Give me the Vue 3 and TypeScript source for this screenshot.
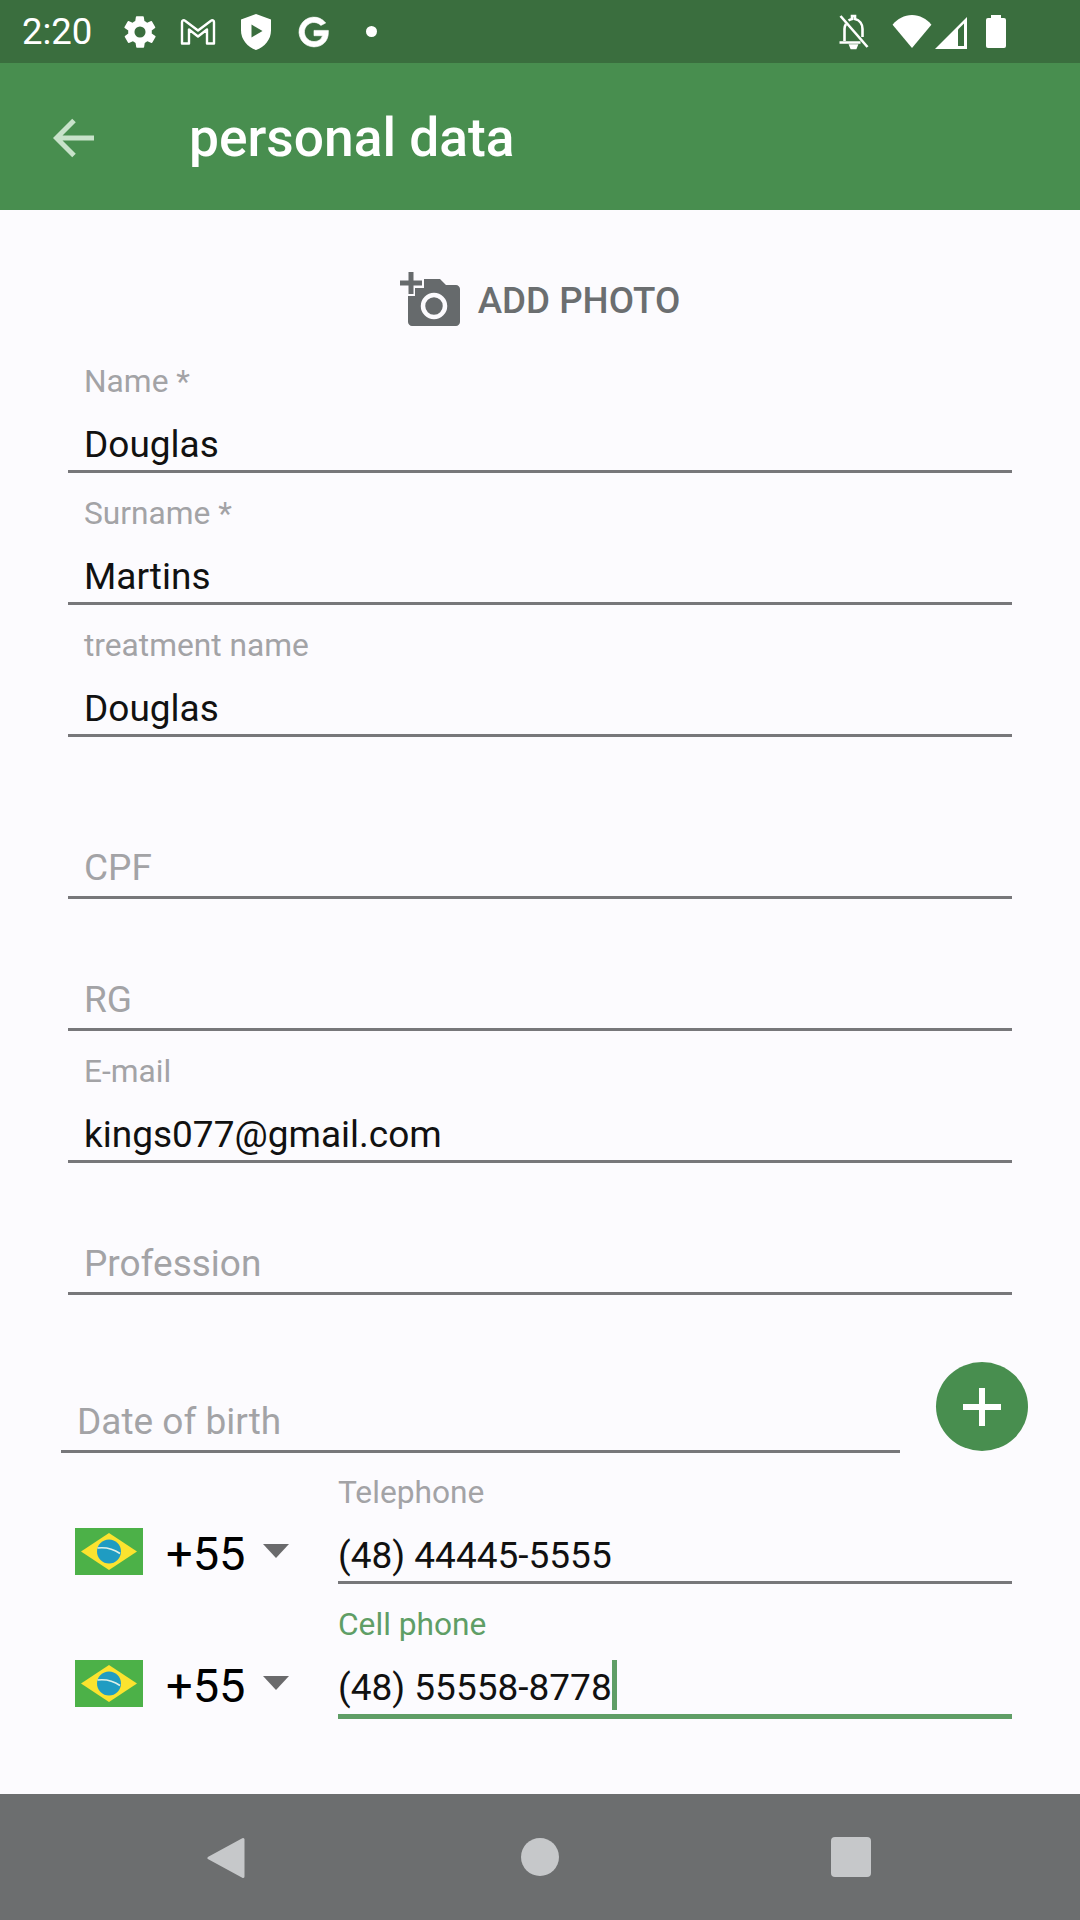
<template>
  <div class="screen">
    <header class="status-bar">
      <span class="clock">2:20</span>
      <div class="status-left">
        <svg class="gear" viewBox="0 0 24 24"><path d="M19.4 13a7.6 7.6 0 0 0 0-2l2.1-1.6a.5.5 0 0 0 .1-.6l-2-3.500a.5.5 0 0 0-.6-.2l-2.500 1a7.3 7.3 0 0 0-1.700-1l-.4-2.600a.5.5 0 0 0-.5-.4h-4a.5.5 0 0 0-.5.4l-.4 2.600a7.3 7.3 0 0 0-1.700 1l-2.500-1a.5.5 0 0 0-.6.2l-2 3.500a.5.5 0 0 0 .1.6L4.600 11a7.6 7.6 0 0 0 0 2l-2.100 1.600a.5.5 0 0 0-.1.6l2 3.500c.1.2.4.3.6.2l2.500-1c.5.4 1.100.7 1.700 1l.4 2.600c0 .2.2.4.5.4h4c.3 0 .5-.2.5-.4l.4-2.600c.6-.3 1.200-.6 1.700-1l2.500 1c.2.1.5 0 .6-.2l2-3.500a.5.5 0 0 0-.1-.6zM12 15.500a3.500 3.500 0 1 1 0-7 3.500 3.500 0 0 1 0 7z"/></svg>
        <svg class="gmail" viewBox="0 0 36 28"><path d="M2 26V4.500c0-1.600 1.800-2.300 3-1.300L18 13 31 3.200c1.200-1 3-.3 3 1.300V26h-7V12l-9 7-9-7v14z" fill="none" stroke="#fff" stroke-width="2.400" stroke-linejoin="round"/></svg>
        <svg class="shield" viewBox="0 0 30 36"><path d="M15 0l15 5.500v11C30 25.500 23.500 33 15 36 6.500 33 0 25.500 0 16.500v-11z" fill="#fff"/><path d="M10.500 10.500v13L21.500 17z" fill="#3a6e3e"/></svg>
        <svg class="google" viewBox="0 0 32 32"><path d="M27 7.500A14 14 0 1 0 16 30c8 0 13.500-5.500 13.500-13.500v-2H16v5h8c-1 3.500-4 5.500-8 5.500a9 9 0 1 1 6.500-15.200z" fill="#fff" stroke="#fff" stroke-width=".6"/></svg>
        <span class="dot"></span>
      </div>
      <div class="status-right">
        <svg class="bell" viewBox="0 0 32 36"><path d="M7 27V15c0-2 .5-3.500 1.500-5M11 6.500c1-.7 2-1.200 3.500-1.500V2h3v3c4.500 1 7.500 5 7.500 10v8M2 28.500h21M13 31.500h6l-1 2.500h-4z" fill="none" stroke="#fff" stroke-width="2.600"/><path d="M3 2l27 31" stroke="#fff" stroke-width="2.600"/></svg>
        <svg class="wifi" viewBox="0 0 40 34"><path d="M20 34L0 10C5 4 12 0 20 0s15 4 20 10z" fill="#fff"/></svg>
        <svg class="signal" viewBox="0 0 32 32"><path d="M0 32L32 0v32z" fill="#fff"/><path d="M23 12.500v16.500h6V6.500z" fill="#3a6e3e"/></svg>
        <span class="battery"></span>
      </div>
    </header>

    <div class="app-bar">
      <svg class="back" viewBox="0 0 42 42"><path d="M41 21H4M21 3.500L3.500 21 21 38.500" fill="none" stroke="#c8e2ca" stroke-width="5"/></svg>
      <h1>personal data</h1>
    </div>

    <main class="form">
      <div class="add-photo">
        <svg viewBox="0 0 60 54"><path d="M24 7h16l6 6h10c2 0 4 2 4 4v33c0 2-2 4-4 4H12c-2 0-4-2-4-4V24h7v-8h9z" fill="#666a6c"/><circle cx="34" cy="34" r="11" fill="none" stroke="#fcfbfe" stroke-width="4.500"/><path d="M8.500 0h5v8.500H22v5h-8.500V22h-5v-8.500H0v-5h8.500z" fill="#666a6c"/></svg>
        <span>ADD PHOTO</span>
      </div>

      <div v-for="f in fields" :key="f.label" class="field" :class="{ gap: f.gap }">
        <label v-if="f.value">{{ f.label }}</label>
        <div class="value" :class="{ hint: !f.value }">{{ f.value || f.label }}</div>
      </div>

      <div class="date-row">
        <div class="date-field">
          <div class="value hint">Date of birth</div>
        </div>
        <button class="fab">
          <svg viewBox="0 0 38 38"><path d="M19 0v38M0 19h38" stroke="#fff" stroke-width="6"/></svg>
        </button>
      </div>

      <div v-for="p in phones" :key="p.label" class="phone-row" :class="{ active: p.focused }">
        <div class="country">
          <svg class="flag" viewBox="0 0 68 47">
            <rect width="68" height="47" fill="#4cb148"/>
            <path d="M34 5l28 18.500L34 42 6 23.500z" fill="#fbe32f"/>
            <circle cx="34" cy="23.500" r="12" fill="#1f9cc2"/>
            <path d="M22.500 20c8-1 16 1 22.500 5.500" fill="none" stroke="#dff1e8" stroke-width="1.600"/>
          </svg>
          <span class="code">+55</span>
          <span class="caret"></span>
        </div>
        <div class="field phone-field" :class="{ focused: p.focused }">
          <label>{{ p.label }}</label>
          <div class="value">{{ p.value }}<i v-if="p.focused" class="cursor"></i></div>
        </div>
      </div>
    </main>

    <nav class="nav-bar">
      <svg class="nav-back" viewBox="0 0 38 42"><path d="M36 2.500v37L2 21z" fill="#c6c8ca" stroke="#c6c8ca" stroke-width="3" stroke-linejoin="round"/></svg>
      <span class="nav-home"></span>
      <span class="nav-recent"></span>
    </nav>
  </div>
</template>

<script setup lang="ts">
interface Field {
  label: string;
  value?: string;
  gap?: boolean;
}

const fields: Field[] = [
  { label: 'Name *', value: 'Douglas' },
  { label: 'Surname *', value: 'Martins' },
  { label: 'treatment name', value: 'Douglas' },
  { label: 'CPF', gap: true },
  { label: 'RG' },
  { label: 'E-mail', value: 'kings077@gmail.com' },
  { label: 'Profession' },
];

const phones = [
  { label: 'Telephone', value: '(48) 44445-5555', focused: false },
  { label: 'Cell phone', value: '(48) 55558-8778', focused: true },
];
</script>

<style>
body {
  background: #fcfbfe;
}
</style>

<style scoped>
.screen {
  width: 1080px;
  height: 1920px;
  display: flex;
  flex-direction: column;
  background: #fcfbfe;
  font-family: Roboto, sans-serif;
  overflow: hidden;
}

.status-bar {
  height: 63px;
  background: #3a6e3e;
  display: flex;
  align-items: center;
  color: #fff;
  padding-left: 22px;
}

.clock {
  font-size: 36.500px;
  width: 99px;
}

.status-left {
  display: flex;
  align-items: center;
}

.gear { width: 38px; height: 38px; fill: #fff; margin-right: 21px; }
.gmail { width: 36px; height: 29px; margin-right: 25px; }
.shield { width: 30px; height: 36px; margin-right: 26px; }
.google { width: 34px; height: 34px; margin-right: 35px; }
.dot { width: 11px; height: 11px; border-radius: 50%; background: #fff; }

.status-right {
  margin-left: auto;
  display: flex;
  align-items: center;
  padding-right: 74px;
}

.bell { width: 33px; height: 36px; margin-right: 22px; }
.wifi { width: 40px; height: 33px; margin-right: 3px; }
.signal { width: 32px; height: 32px; margin-right: 19px; margin-top: 2px; }
.battery {
  width: 20px;
  height: 30px;
  background: #fff;
  border-radius: 2px;
  position: relative;
  margin-top: 3px;
}
.battery::before {
  content: '';
  position: absolute;
  left: 5px;
  top: -3px;
  width: 10px;
  height: 3px;
  background: #fff;
}

.app-bar {
  height: 147px;
  box-sizing: border-box;
  background: #488e4f;
  display: flex;
  align-items: center;
  padding: 2px 0 0 53px;
}

.back { width: 42px; height: 42px; margin-right: 94px; }

.app-bar h1 {
  margin: 0;
  font-size: 53.300px;
  font-weight: 500;
  color: #fff;
}

.form {
  flex: 1;
  padding: 0 68px;
}

.add-photo {
  display: flex;
  justify-content: center;
  align-items: center;
  height: 131px;
  padding-top: 49px;
  box-sizing: border-box;
  color: #6b6e70;
  font-size: 36.750px;
  font-weight: 500;
}

.add-photo svg { width: 60px; height: 54px; margin-right: 18px; margin-top: -3px; }

.field {
  height: 132px;
  box-sizing: border-box;
  border-bottom: 3px solid #77777a;
  display: flex;
  flex-direction: column;
  justify-content: flex-end;
  padding: 0 16px 1px;
  position: relative;
}

.field.gap { margin-top: 30px; }

.field label {
  font-size: 31.700px;
  color: #a3a3a6;
  line-height: 37px;
  margin-bottom: 21px;
}

.value {
  font-size: 37px;
  line-height: 48px;
  color: #111;
}

.value.hint { color: #a3a3a6; margin-bottom: 3px; }

.date-row {
  display: flex;
  margin-left: -7px;
  margin-right: -16px;
  height: 158px;
  justify-content: space-between;
  align-items: flex-end;
  position: relative;
}

.date-field {
  width: 839px;
  box-sizing: border-box;
  border-bottom: 3px solid #77777a;
  padding: 0 16px 1px;
}

.fab {
  width: 92px;
  height: 89px;
  border: 0;
  padding: 0;
  border-radius: 50%;
  background: #488e4f;
  display: flex;
  align-items: center;
  justify-content: center;
  align-self: flex-start;
  margin-top: 67px;
}

.fab svg { width: 38px; height: 38px; }

.phone-row {
  display: flex;
  align-items: flex-end;
  height: 131px;
}

.phone-row.active { height: 135px; }

.country {
  width: 270px;
  flex: none;
  display: flex;
  align-items: center;
  padding: 0 0 7px 7px;
  box-sizing: border-box;
}

.phone-row.active .country { padding-bottom: 10px; }

.flag { width: 68px; height: 47px; margin-right: 23px; }

.code {
  font-size: 47px;
  line-height: 47px;
  margin-top: 5px;
  color: #000;
  margin-right: 17px;
}

.caret {
  width: 0;
  height: 0;
  border-left: 13px solid transparent;
  border-right: 13px solid transparent;
  border-top: 14px solid #6a6a6c;
}

.phone-field {
  flex: 1;
  height: 100%;
  padding-left: 0;
  padding-right: 0;
}

.focused {
  border-bottom: 5px solid #5f9e66;
  padding-bottom: 2px;
}

.focused label { color: #5f9e66; margin-bottom: 17px; }

.cursor {
  display: inline-block;
  width: 5px;
  height: 50px;
  background: #5f9e66;
  vertical-align: -10px;
}

.nav-bar {
  height: 126px;
  background: #6c6e6f;
  position: relative;
  display: flex;
  align-items: center;
}

.nav-back { width: 38px; height: 42px; margin-left: 207px; margin-top: 1px; }
.nav-home {
  width: 38px;
  height: 38px;
  border-radius: 50%;
  background: #c6c8ca;
  margin-left: 276px;
}
.nav-recent {
  width: 40px;
  height: 40px;
  border-radius: 4px;
  background: #c6c8ca;
  margin-left: 272px;
}
</style>
